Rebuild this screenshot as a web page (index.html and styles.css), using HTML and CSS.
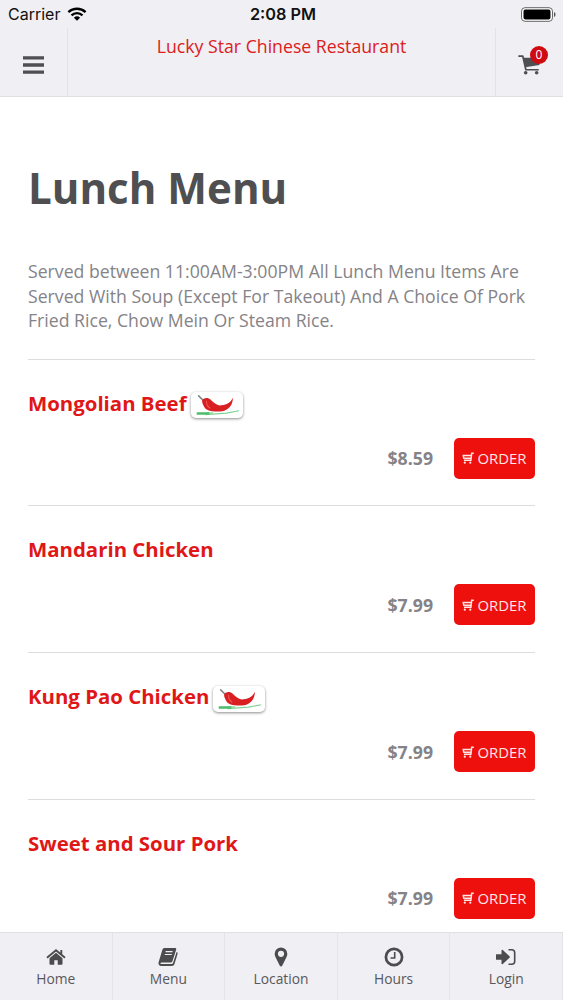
FILE: index.html
```html
<!DOCTYPE html>
<html lang="en">
<head>
    <meta charset="UTF-8">
    <meta name="viewport" content="width=device-width, initial-scale=1.0">
    <title>Lucky Star Chinese Restaurant</title>
    <link rel="stylesheet" href="styles.css">
</head>
<body>
    <!-- Shared icons -->
    <svg class="icon-defs" aria-hidden="true">
        <symbol id="icon-cart" viewBox="0 0 24 22">
            <path d="M1 2.200h4l3.200 14.300H21" fill="none" stroke="currentColor" stroke-width="1.800" stroke-linejoin="round" stroke-linecap="round"/>
            <path d="M4.800 4H22.500v7.500L7.500 14z" fill="currentColor"/>
            <circle cx="8" cy="19.600" r="1.900" fill="currentColor"/>
            <circle cx="19.500" cy="19.600" r="1.900" fill="currentColor"/>
        </symbol>
        <symbol id="icon-order" viewBox="0 0 12 12">
            <path d="M11.800 1.200H9.700L8.900 8.300H1.900M.5 3.400h9M1.200 3.400l.6 2.900 7-.3" fill="none" stroke="currentColor" stroke-width="1.500"/>
            <circle cx="2.800" cy="10.700" r="1.100" fill="currentColor"/>
            <circle cx="8.300" cy="10.700" r="1.100" fill="currentColor"/>
        </symbol>
        <symbol id="icon-chili" viewBox="0 0 52 27">
            <path d="M5 22.500l17-1M14 23.500l22-1.500 13-2.500" fill="none" stroke="#7fd396" stroke-width="1.200"/>
            <path d="M5 22.300h13" stroke="#4fbd6c" stroke-width="2.400"/>
            <path d="M6.500 3.500l5 5" stroke="#7d8580" stroke-width="1.600"/>
            <path d="M10.500 9c1-3 6-4 9-1 3 3 5 5 9 6 6 0 11-2 14-8 0 8-5 13-11 14-8 1-17 0-19-5-1-2-2-4-2-6z" fill="#d91f22"/>
            <path d="M15 9c0 3 1 6 4 8" fill="none" stroke="#ea5450" stroke-width="1.200"/>
        </symbol>
    </svg>

    <div class="app">
        <header class="header">
            <div class="status-bar">
                <div class="carrier">
                    <span>Carrier</span>
                    <svg class="wifi" viewBox="0 0 20 14">
                        <path d="M1.400 5.200a12.500 12.500 0 0 1 17.200 0M4.500 8.300a8 8 0 0 1 11 0" fill="none" stroke="#000" stroke-width="2.300"/>
                        <path d="M10 13.800L6.900 10.700a4.500 4.500 0 0 1 6.200 0z"/>
                    </svg>
                </div>
                <div class="clock">2:08 PM</div>
                <svg class="battery" viewBox="0 0 36 15">
                    <rect x="1.500" y=".7" width="31" height="13.600" rx="3.500" fill="#fff" stroke="#666" stroke-width="1"/>
                    <rect x="3.500" y="2.600" width="27" height="9.800" rx="1.800"/>
                    <path d="M34 5c2 .7 2 4.300 0 5z" fill="#555"/>
                </svg>
            </div>
            <div class="nav-bar">
                <button class="menu-btn" aria-label="Open menu">
                    <svg viewBox="0 0 21 18"><path d="M0 1.800h21M0 9h21M0 16.200h21" stroke="currentColor" stroke-width="3.300"/></svg>
                </button>
                <div class="restaurant-name">Lucky Star Chinese Restaurant</div>
                <button class="cart-btn" aria-label="Cart">
                    <svg><use href="#icon-cart"/></svg>
                    <span class="badge">0</span>
                </button>
            </div>
        </header>

        <main class="content">
            <h1>Lunch Menu</h1>
            <p class="description">Served between 11:00AM-3:00PM All Lunch Menu Items Are<br>Served With Soup (Except For Takeout) And A Choice Of Pork<br>Fried Rice, Chow Mein Or Steam Rice.</p>

            <section class="item">
                <h2><span>Mongolian Beef</span> <svg class="spicy"><use href="#icon-chili"/></svg></h2>
                <div class="item-footer">
                    <span class="price">$8.59</span>
                    <button class="order-btn"><svg><use href="#icon-order"/></svg><span>ORDER</span></button>
                </div>
            </section>
            <section class="item">
                <h2><span>Mandarin Chicken</span></h2>
                <div class="item-footer">
                    <span class="price">$7.99</span>
                    <button class="order-btn"><svg><use href="#icon-order"/></svg><span>ORDER</span></button>
                </div>
            </section>
            <section class="item">
                <h2><span>Kung Pao Chicken</span> <svg class="spicy"><use href="#icon-chili"/></svg></h2>
                <div class="item-footer">
                    <span class="price">$7.99</span>
                    <button class="order-btn"><svg><use href="#icon-order"/></svg><span>ORDER</span></button>
                </div>
            </section>
            <section class="item">
                <h2><span>Sweet and Sour Pork</span></h2>
                <div class="item-footer">
                    <span class="price">$7.99</span>
                    <button class="order-btn"><svg><use href="#icon-order"/></svg><span>ORDER</span></button>
                </div>
            </section>
        </main>

        <nav class="tab-bar">
            <a class="tab">
                <svg viewBox="0 0 20 20"><path d="M10 5.800l6.500 5.400V17a.8.8 0 0 1-.8.800h-4v-4.600H8.300v4.600h-4a.8.8 0 0 1-.8-.8v-5.800z"/><path d="M1 10.800L10 3.300l9 7.500M15.300 3v4.500" fill="none" stroke="currentColor" stroke-width="1.900"/></svg>
                <span>Home</span>
            </a>
            <a class="tab">
                <svg viewBox="0 0 20 20"><path d="M6.500 1H17c1 0 1.500.7 1.200 1.600L14.500 14c-.3 1-1 1.500-2 1.500H3.500c-1.300 0-1.500 1.500-.2 1.500h10.200c.8 0 1.300-.4 1.600-1.200L18.600 5c1 .4 1.200 1 .9 2l-3 10c-.4 1.300-1.300 2-2.600 2H3.200C1.200 19 0 17 .6 15.200L4.300 3C4.700 1.700 5.300 1 6.500 1z"/><path d="M7.600 4.700h7M6.800 7.500h7" stroke="#f0eff3" stroke-width="1.200"/></svg>
                <span>Menu</span>
            </a>
            <a class="tab">
                <svg viewBox="0 0 20 20"><path fill-rule="evenodd" d="M10 .5a6.300 6.300 0 0 0-6.300 6.300c0 1.500.4 2.500 1 3.700l4.100 8.300c.5 1 1.900 1 2.400 0l4.100-8.300c.6-1.200 1-2.200 1-3.700A6.300 6.300 0 0 0 10 .5zm0 3.200a3.100 3.100 0 1 1 0 6.200 3.100 3.100 0 0 1 0-6.200z"/></svg>
                <span>Location</span>
            </a>
            <a class="tab">
                <svg viewBox="0 0 20 20"><circle cx="10" cy="10" r="8.100" fill="none" stroke="currentColor" stroke-width="2.700"/><path d="M10.700 5v6H6.500" fill="none" stroke="currentColor" stroke-width="1.600"/></svg>
                <span>Hours</span>
            </a>
            <a class="tab">
                <svg viewBox="0 0 20 20"><path d="M.5 7.200h5V3.500c0-.8.800-1.100 1.300-.6l6.700 6.300c.5.500.5 1.100 0 1.600l-6.700 6.300c-.5.500-1.300.2-1.300-.6v-3.700h-5a.6.600 0 0 1-.6-.6V7.800c0-.3.300-.6.6-.6z"/><path d="M12.500 2.700h3.200c1.800 0 3 1.200 3 3v8.600c0 1.800-1.200 3-3 3h-3.200" fill="none" stroke="currentColor" stroke-width="1.600"/></svg>
                <span>Login</span>
            </a>
        </nav>
    </div>
</body>
</html>
```
FILE: styles.css
```css
* {
    margin: 0;
    padding: 0;
    box-sizing: border-box;
}

body {
    font-family: 'Open Sans', 'Noto Sans', sans-serif;
    background-color: #fff;
    color: #4f4e51;
}

button {
    border: none;
    background: none;
    font-family: inherit;
    color: inherit;
    cursor: pointer;
}

.icon-defs {
    display: none;
}

.app {
    display: flex;
    flex-direction: column;
    height: 100vh;
    overflow: hidden;
}

/* Header */
.header {
    flex: none;
    height: 97px;
    background-color: #f0eff3;
    border-bottom: 1px solid #dfdee2;
}

.status-bar {
    display: grid;
    grid-template-columns: 1fr auto 1fr;
    align-items: center;
    height: 28px;
    padding: 0 7px 0 8px;
    font-family: Inter, 'Liberation Sans', sans-serif;
    font-size: 16px;
    color: #111;
}

.carrier {
    display: flex;
    align-items: center;
    gap: 7px;
}

.wifi {
    width: 20px;
    height: 14px;
}

.clock {
    padding-left: 2px;
    font-size: 16.3px;
    font-weight: 600;
}

.battery {
    width: 36px;
    height: 15px;
    justify-self: end;
}

.nav-bar {
    display: flex;
    height: 68px;
}

.menu-btn,
.cart-btn {
    display: flex;
    align-items: center;
    justify-content: center;
    width: 68px;
    padding-top: 5px;
}

.menu-btn {
    border-right: 1px solid #e3e2e6;
}

.menu-btn svg {
    width: 21px;
    height: 18px;
}

.cart-btn {
    position: relative;
    border-left: 1px solid #e3e2e6;
}

.cart-btn svg {
    width: 23px;
    height: 21px;
}

.badge {
    position: absolute;
    top: 18px;
    right: 15px;
    width: 18px;
    height: 18px;
    border-radius: 50%;
    background-color: #cf0a10;
    color: #fff;
    font-size: 12px;
    line-height: 18px;
    text-align: center;
}

.restaurant-name {
    flex: 1;
    padding-top: 6px;
    text-align: center;
    font-size: 17.7px;
    line-height: 24px;
    color: #dc2020;
}

/* Menu list */
.content {
    flex: 1;
    min-height: 0;
    overflow: hidden;
    padding: 61px 28px 0;
}

h1 {
    font-size: 42.1px;
    line-height: 59px;
    font-weight: 700;
}

.description {
    padding: 42px 0 26px;
    font-size: 17.67px;
    line-height: 24.5px;
    color: #858387;
    white-space: nowrap;
}

.item {
    height: 146.8px;
    border-top: 1px solid #dedcdf;
    padding-top: 28px;
}

.item h2 {
    display: flex;
    align-items: center;
    gap: 4px;
    height: 30px;
    font-size: 20.4px;
    line-height: 30px;
    font-weight: 700;
    color: #e01717;
}

.spicy {
    width: 52px;
    height: 26px;
    margin-top: 5px;
    border-radius: 5px;
    background-color: #fff;
    box-shadow: 0 1px 3px rgba(0, 0, 0, 0.45);
}

.item-footer {
    display: flex;
    align-items: center;
    justify-content: flex-end;
    gap: 21px;
    margin-top: 20px;
}

.price {
    font-size: 17.7px;
    font-weight: 700;
    color: #858387;
}

.order-btn {
    display: flex;
    align-items: center;
    justify-content: center;
    gap: 3px;
    width: 81px;
    height: 41px;
    border-radius: 5px;
    background-color: #ed100d;
    color: #ffe5e3;
    font-size: 14.9px;
}

.order-btn svg {
    width: 12px;
    height: 12px;
}

/* Bottom tabs */
.tab-bar {
    flex: none;
    display: grid;
    grid-template-columns: repeat(5, 1fr);
    height: 68px;
    background-color: #f0eff3;
    border-top: 1px solid #e0dfe3;
}

.tab {
    display: flex;
    flex-direction: column;
    align-items: center;
    padding-top: 14px;
    border-right: 1px solid #e5e4e8;
    font-size: 13.8px;
    line-height: 20px;
    color: #59575b;
}

.tab svg {
    width: 20px;
    height: 20px;
    margin-bottom: 2px;
    color: #4c4b4e;
    fill: currentColor;
}
```
